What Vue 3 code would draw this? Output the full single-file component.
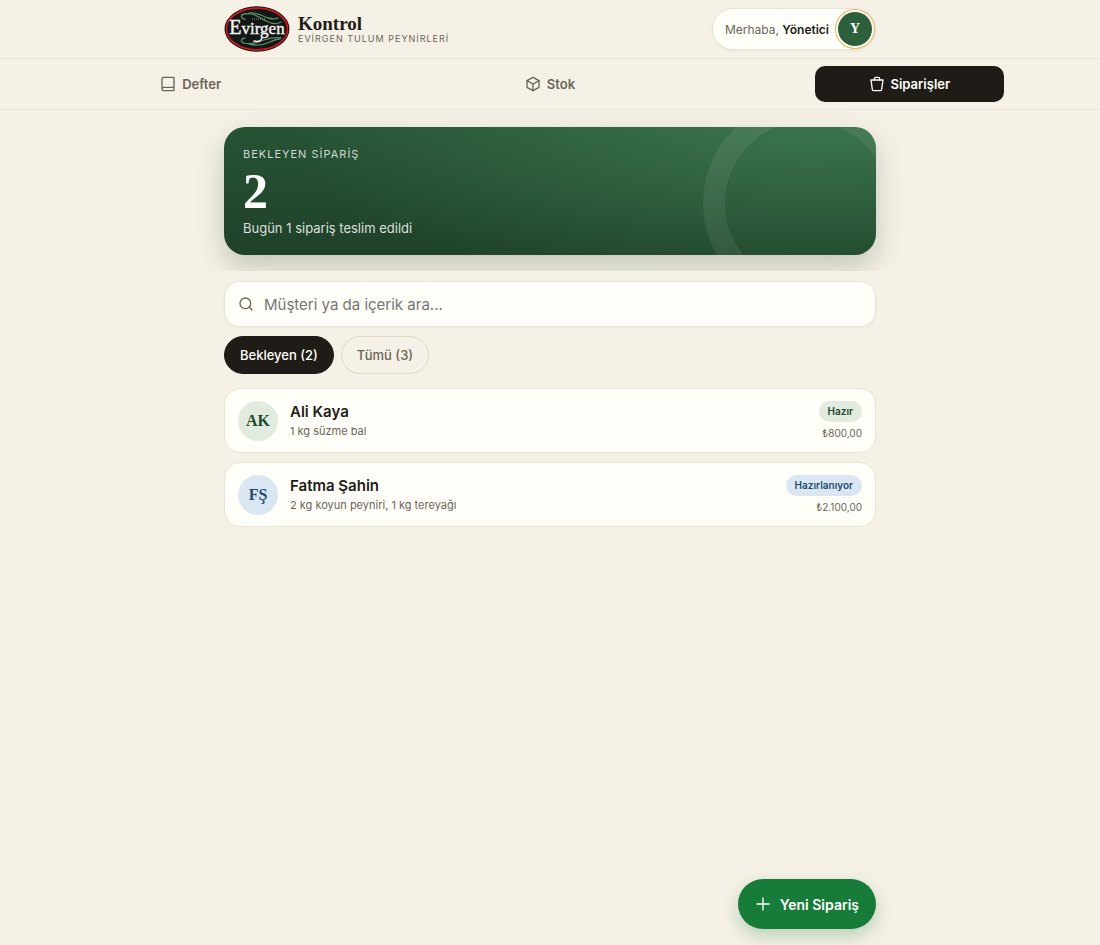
<template>
  <div class="app-shell">
    <header class="topbar">
      <div class="topbar-inner">
        <a class="brand" href="#">
          <svg class="brand-logo" viewBox="0 0 66 46" role="img" aria-label="Evirgen">
            <ellipse cx="33" cy="23" rx="32.5" ry="22.8" fill="#131716" />
            <ellipse cx="33" cy="23" rx="30.6" ry="20.9" fill="none" stroke="#d0181f" stroke-width="1.6" />
            <g fill="none" stroke="#5b8a67" stroke-width="1.3" stroke-linecap="round">
              <path d="M21 13c-4 0-5-4-1-5 8-2 15 3 22 7 6 3 12 3 15 1" />
              <path d="M25 7c8-1 13 3 19 5 4 1 8 1 10 0" />
              <path d="M21 32c-4 0-5 4-1 5 7 2 13 0 20-3 6-2 12-3 17-2" />
              <path d="M25 38c8 2 15 1 21-2 4-2 7-3 10-3" />
            </g>
            <path d="M28 13h13" stroke="#8b968e" stroke-width="1" stroke-dasharray="1 1" />
            <text x="33" y="28" text-anchor="middle" class="logo-text"><tspan class="logo-initial">E</tspan>virgen</text>
            <path d="M38 32c-1 3-4 4-8 3" fill="none" stroke="#f4f4f0" stroke-width="1.4" stroke-linecap="round" />
          </svg>
          <span class="brand-copy">
            <span class="brand-title">Kontrol</span>
            <span class="brand-sub">EVİRGEN TULUM PEYNİRLERİ</span>
          </span>
        </a>
        <button class="user-pill" type="button">
          <span class="user-greeting">Merhaba, <strong>Yönetici</strong></span>
          <span class="user-avatar">Y</span>
        </button>
      </div>
    </header>

    <nav class="tabs" aria-label="Bölümler">
      <button
        v-for="tab in tabs"
        :key="tab.id"
        type="button"
        class="tab"
        :class="{ active: activeTab === tab.id }"
        @click="activeTab = tab.id"
      >
        <svg class="tab-icon" viewBox="0 0 24 24" aria-hidden="true">
          <path v-for="d in tab.paths" :key="d" :d="d" />
        </svg>
        {{ tab.label }}
      </button>
    </nav>

    <main class="content">
      <section class="hero">
        <p class="hero-label">BEKLEYEN SİPARİŞ</p>
        <p class="hero-count">{{ pending.length }}</p>
        <p class="hero-note">Bugün {{ deliveredToday }} sipariş teslim edildi</p>
      </section>

      <div class="filters">
        <label class="search">
          <svg class="search-icon" viewBox="0 0 24 24" aria-hidden="true">
            <circle cx="11" cy="11" r="8" />
            <path d="m17 17 4 4" />
          </svg>
          <input v-model="query" type="text" placeholder="Müşteri ya da içerik ara..." aria-label="Sipariş ara">
        </label>
        <div class="chips">
          <button type="button" class="chip" :class="{ active: filter === 'pending' }" @click="filter = 'pending'">
            Bekleyen ({{ pending.length }})
          </button>
          <button type="button" class="chip" :class="{ active: filter === 'all' }" @click="filter = 'all'">
            Tümü ({{ orders.length }})
          </button>
        </div>
      </div>

      <ul class="orders">
        <li v-for="order in visibleOrders" :key="order.id">
          <button type="button" class="order">
            <span class="order-avatar" :class="order.tone">{{ order.initials }}</span>
            <span class="order-body">
              <span class="order-name">{{ order.name }}</span>
              <span class="order-items">{{ order.items }}</span>
            </span>
            <span class="order-side">
              <span class="badge" :class="order.tone">{{ order.status }}</span>
              <span class="order-total">{{ order.total }}</span>
            </span>
          </button>
        </li>
      </ul>
    </main>

    <div class="fab-row">
      <button type="button" class="fab">
        <svg class="fab-icon" viewBox="0 0 24 24" aria-hidden="true">
          <path d="M12 3v18M3 12h18" />
        </svg>
        Yeni Sipariş
      </button>
    </div>
  </div>
</template>

<script setup>
import { computed, ref } from 'vue'

const tabs = [
  {
    id: 'ledger',
    label: 'Defter',
    paths: ['M3 20V4a2 2 0 0 1 2-2h16v20H5a2 2 0 0 1-2-2 3 3 0 0 1 3-3h15']
  },
  {
    id: 'stock',
    label: 'Stok',
    paths: ['M12 2 21 7v10l-9 5-9-5V7z', 'm3 7 9 5 9-5', 'M12 12v10']
  },
  {
    id: 'orders',
    label: 'Siparişler',
    paths: ['M3 6h18l-2 14a2 2 0 0 1-2 2H7a2 2 0 0 1-2-2z', 'M8 6V4a2 2 0 0 1 2-2h4a2 2 0 0 1 2 2v2']
  }
]

const orders = ref([
  { id: 1, initials: 'AK', name: 'Ali Kaya', items: '1 kg süzme bal', status: 'Hazır', tone: 'ready', total: '₺800,00' },
  { id: 2, initials: 'FŞ', name: 'Fatma Şahin', items: '2 kg koyun peyniri, 1 kg tereyağı', status: 'Hazırlanıyor', tone: 'preparing', total: '₺2.100,00' },
  { id: 3, initials: 'MD', name: 'Mehmet Demir', items: '3 kg tulum peyniri', status: 'Teslim', tone: 'delivered', total: '₺1.500,00' }
])

const activeTab = ref('orders')
const filter = ref('pending')
const query = ref('')

const pending = computed(() => orders.value.filter((o) => o.tone !== 'delivered'))
const deliveredToday = computed(() => orders.value.length - pending.value.length)

const visibleOrders = computed(() => {
  const list = filter.value === 'pending' ? pending.value : orders.value
  const q = query.value.trim().toLocaleLowerCase('tr')
  return q ? list.filter((o) => `${o.name} ${o.items}`.toLocaleLowerCase('tr').includes(q)) : list
})
</script>

<style>
body {
  margin: 0;
  background: #f6f1e6;
}
</style>

<style scoped>
.app-shell {
  --ink: #1f1c17;
  --muted: #6b6558;
  --paper: #fffef9;
  --line: #ebe4d5;
  --serif: "Liberation Serif", "Times New Roman", serif;
  min-height: 100vh;
  display: flex;
  flex-direction: column;
  background: #f6f1e6;
  color: var(--ink);
  font-family: Inter, "Noto Sans", sans-serif;
}

button {
  font: inherit;
  color: inherit;
  border: 0;
  cursor: pointer;
}

p,
ul {
  margin: 0;
  padding: 0;
}

.topbar {
  border-bottom: 1px solid var(--line);
}

.topbar-inner {
  box-sizing: border-box;
  max-width: 680px;
  height: 58px;
  margin: 0 auto;
  padding: 0 14px;
  display: flex;
  align-items: center;
  justify-content: space-between;
}

.brand {
  display: flex;
  align-items: center;
  gap: 8px;
  color: inherit;
  text-decoration: none;
}

.brand-logo {
  width: 66px;
  height: 46px;
}

.logo-text {
  font-family: "Liberation Serif", serif;
  font-size: 17px;
  fill: #f4f4f0;
  stroke: #f4f4f0;
  stroke-width: 0.4;
}

.logo-initial {
  font-size: 20px;
}

.brand-copy {
  display: flex;
  flex-direction: column;
}

.brand-title {
  font-family: var(--serif);
  font-size: 19px;
  line-height: 20px;
  font-weight: 700;
}

.brand-sub {
  font-size: 9px;
  line-height: 10px;
  letter-spacing: 1px;
  color: var(--muted);
}

.user-pill {
  box-sizing: border-box;
  height: 42px;
  padding: 0 2px 0 12px;
  display: flex;
  align-items: center;
  gap: 8px;
  border: 1px solid var(--line);
  border-radius: 21px;
  background: var(--paper);
  box-shadow: 0 1px 3px rgba(60, 50, 30, 0.06);
}

.user-greeting {
  font-size: 12px;
  color: var(--muted);
}

.user-greeting strong {
  font-weight: 600;
  color: var(--ink);
}

.user-avatar {
  box-sizing: border-box;
  width: 36px;
  height: 36px;
  display: grid;
  place-items: center;
  border: 1px solid var(--paper);
  border-radius: 50%;
  background: #2d5f3a;
  box-shadow: 0 0 0 1px var(--paper), 0 0 0 2px #e7b866;
  color: #fff;
  font-family: var(--serif);
  font-size: 14px;
  font-weight: 700;
}

.tabs {
  display: grid;
  grid-template-columns: repeat(3, 1fr);
  justify-items: center;
  gap: 6px;
  padding: 7px 14px;
  border-bottom: 1px solid var(--line);
}

.tab {
  width: 100%;
  max-width: 189px;
  height: 36px;
  display: flex;
  align-items: center;
  justify-content: center;
  gap: 6px;
  padding: 0;
  border-radius: 10px;
  background: transparent;
  color: var(--muted);
  font-size: 13px;
  font-weight: 600;
}

.tab.active {
  background: var(--ink);
  color: var(--paper);
}

.tab-icon,
.search-icon,
.fab-icon {
  width: 16px;
  height: 16px;
  flex-shrink: 0;
  fill: none;
  stroke: currentColor;
  stroke-width: 2;
  stroke-linecap: round;
  stroke-linejoin: round;
}

.content {
  box-sizing: border-box;
  width: 100%;
  max-width: 680px;
  margin: 0 auto;
  padding: 17px 14px 0;
}

.hero {
  position: relative;
  overflow: hidden;
  padding: 19px 19px 18px;
  border-radius: 21px;
  background:
    radial-gradient(90% 150% at 90% 0%, rgba(74, 144, 94, 0.55) 0%, rgba(74, 144, 94, 0) 90%),
    linear-gradient(180deg, #29563a 0%, #1f4229 100%);
  background:
    radial-gradient(90% 150% at 90% 0%, rgba(74, 144, 94, 0.55) 0%, rgba(74, 144, 94, 0) 90%),
    linear-gradient(180deg, #275335 0%, #1f4129 100%);
  box-shadow: 0 12px 28px rgba(31, 66, 41, 0.24);
  color: #fff;
}

.hero::after {
  content: "";
  position: absolute;
  top: -28px;
  right: -35px;
  width: 164px;
  height: 164px;
  border: 22px solid rgba(255, 255, 255, 0.07);
  border-radius: 50%;
}

.hero-label {
  font-size: 11px;
  line-height: 16px;
  letter-spacing: 1px;
  color: rgba(255, 255, 255, 0.78);
}

.hero-count {
  margin: 6px 0 5px;
  font-family: var(--serif);
  font-size: 50px;
  line-height: 46px;
  font-weight: 700;
}

.hero-note {
  font-size: 13px;
  line-height: 18px;
  color: rgba(255, 255, 255, 0.85);
}

.filters {
  position: sticky;
  top: 0;
  margin: 16px -14px 0;
  padding: 10px 14px 14px;
  background: #f6f1e6;
}

.search {
  box-sizing: border-box;
  height: 46px;
  display: flex;
  align-items: center;
  gap: 10px;
  padding: 0 13px;
  border: 1px solid var(--line);
  border-radius: 15px;
  background: var(--paper);
  box-shadow: 0 1px 3px rgba(60, 50, 30, 0.05);
}

.search-icon {
  color: var(--muted);
}

.search input {
  flex: 1;
  min-width: 0;
  padding: 0;
  border: 0;
  outline: 0;
  background: transparent;
  color: var(--ink);
  font: inherit;
  font-size: 15px;
}

.search input::placeholder {
  color: #757575;
}

.chips {
  display: flex;
  gap: 7px;
  margin-top: 9px;
}

.chip {
  height: 38px;
  padding: 0 15px;
  border: 1px solid #dfd7c2;
  border-radius: 19px;
  background: transparent;
  color: var(--muted);
  font-size: 13px;
  font-weight: 500;
}

.chip.active {
  border-color: var(--ink);
  background: var(--ink);
  color: var(--paper);
}

.orders {
  display: grid;
  gap: 9px;
  list-style: none;
}

.order {
  width: 100%;
  height: 65px;
  display: flex;
  align-items: center;
  gap: 12px;
  padding: 0 13px;
  border: 1px solid var(--line);
  border-radius: 16px;
  background: var(--paper);
  text-align: left;
}

.order-avatar {
  width: 40px;
  height: 40px;
  display: grid;
  place-items: center;
  border-radius: 50%;
  font-family: var(--serif);
  font-size: 16px;
  font-weight: 700;
}

.ready {
  background: #e2ebdf;
  color: #1f4a2b;
}

.preparing {
  background: #dae7f3;
  color: #234b6e;
}

.delivered {
  background: #eee8da;
  color: #6b6558;
}

.order-body {
  flex: 1;
  min-width: 0;
  display: flex;
  flex-direction: column;
  gap: 2px;
}

.order-name {
  font-size: 15px;
  line-height: 18px;
  font-weight: 600;
}

.order-items {
  font-size: 11px;
  line-height: 16px;
  color: var(--muted);
}

.order-side {
  display: flex;
  flex-direction: column;
  align-items: flex-end;
  gap: 4px;
}

.badge {
  padding: 0 9px;
  border-radius: 11px;
  font-size: 10px;
  line-height: 21px;
  font-weight: 600;
}

.order-total {
  font-size: 10px;
  line-height: 14px;
  color: var(--muted);
}

.fab-row {
  position: sticky;
  bottom: 0;
  box-sizing: border-box;
  width: 100%;
  max-width: 680px;
  margin: auto auto 0;
  padding: 16px 14px;
  display: flex;
  justify-content: flex-end;
}

.fab {
  height: 50px;
  display: flex;
  align-items: center;
  gap: 9px;
  padding: 0 17px;
  border-radius: 25px;
  background: #177c3a;
  box-shadow: 0 7px 18px rgba(23, 124, 58, 0.28);
  color: #fff;
  font-size: 14px;
  font-weight: 600;
}
</style>
